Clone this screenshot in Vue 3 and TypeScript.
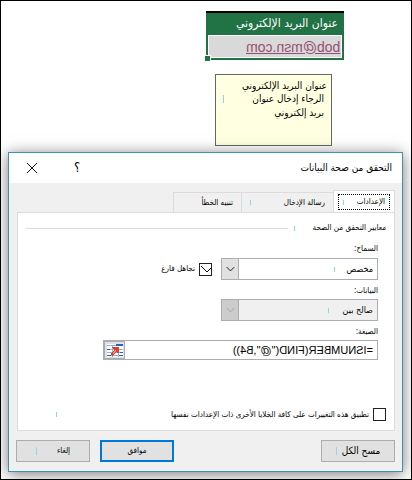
<script setup lang="ts">
import { ref } from 'vue'

const tabs = ['الإعدادات', 'رسالة الإدخال', 'تنبيه الخطأ']
const activeTab = ref(0)
const allow = ref('مخصص')
const dataRule = ref('صالح بين')
const ignoreBlank = ref(true)
const applyToAll = ref(false)
const formula = ref('=ISNUMBER(FIND("@",B4))')
</script>

<template>
  <main class="sheet" dir="rtl" lang="ar">
    <table class="cells">
      <thead>
        <tr><th scope="col">عنوان البريد الإلكتروني</th></tr>
      </thead>
      <tbody>
        <tr>
          <td><a class="mirror" dir="ltr" href="mailto:bob@msn.com">bob@msn.com</a><i class="handle"></i></td>
        </tr>
      </tbody>
    </table>

    <aside class="note">
      <strong>عنوان البريد الإلكتروني</strong>
      <p><span>الرجاء إدخال عنوان</span><i class="tick"></i></p>
      <p>بريد إلكتروني</p>
    </aside>

    <section class="dialog" role="dialog" aria-labelledby="title">
      <header class="titlebar">
        <h1 id="title">التحقق من صحة البيانات</h1>
        <button type="button" class="plain" aria-label="تعليمات">؟</button>
        <button type="button" class="plain" aria-label="إغلاق">
          <svg width="12" height="12" viewBox="0 0 12 12"><path d="M1 1 11 11M11 1 1 11" /></svg>
        </button>
      </header>

      <div class="content">
        <nav class="tabs" role="tablist">
          <button
            v-for="(tab, i) in tabs"
            :key="tab"
            type="button"
            role="tab"
            class="tab"
            :class="{ active: i === activeTab }"
            :aria-selected="i === activeTab"
            @click="activeTab = i"
          >
            <span class="tab-text">{{ tab }}<i v-if="i < 2" class="tick short"></i></span>
          </button>
        </nav>

        <form class="panel" @submit.prevent>
          <h2 class="legend"><span>معايير التحقق من الصحة</span><i class="tick short"></i><i class="rule"></i></h2>

          <div class="fields">
            <label for="allow">السماح:</label>
            <div class="line">
              <div class="combo">
                <select id="allow" v-model="allow"><option>مخصص</option></select>
                <i class="tick short"></i>
                <svg class="arrow" width="17" height="20" viewBox="0 0 17 20"><path d="M5 8 9 12 13 8" /></svg>
              </div>
              <label class="check">
                <input v-model="ignoreBlank" type="checkbox" />
                <svg class="mark" width="13" height="13" viewBox="0 0 13 13"><path d="M2 3 8 9 12 5" /></svg>
                <span>تجاهل فارغ</span>
              </label>
            </div>

            <label for="data">البيانات:</label>
            <div class="line">
              <div class="combo disabled">
                <select id="data" v-model="dataRule" disabled><option>صالح بين</option></select>
                <i class="tick short"></i>
                <svg class="arrow" width="17" height="20" viewBox="0 0 17 20"><path d="M5 8 9 12 13 8" /></svg>
              </div>
            </div>

            <label for="formula">الصيغة:</label>
            <div class="formula">
              <input id="formula" v-model="formula" class="mirror" dir="ltr" type="text" spellcheck="false" />
              <button type="button" class="picker" aria-label="تحديد نطاق">
                <svg width="16" height="13" viewBox="0 0 16 13" shape-rendering="crispEdges">
                  <path fill="#fff" d="M0 0h16v13H0z" />
                  <path fill="#8fb2e6" d="M0 1h9v1H0zM0 5h16v1H0zM0 8h16v1H0zM0 11h16v1H0zM5 1h1v12H5zM11 3h1v10h-1z" />
                  <path fill="#2c62b8" d="M9 0h7v2H9zM0 11h4v1H0zM12 11h4v1h-4zM0 5h3v1H0zM13 8h3v1h-3z" />
                  <path fill="#dc4128" d="M5 3h7v6h-1L9 8l-3 4-3-2 4-4z" />
                  <path fill="#f58a68" d="m5 9 3-3 1 1-3 3z" />
                </svg>
              </button>
            </div>
          </div>

          <label class="check apply">
            <input v-model="applyToAll" type="checkbox" />
            <span>تطبيق هذه التغييرات على كافة الخلايا الأخرى ذات الإعدادات نفسها</span>
            <i class="tick short"></i>
          </label>
        </form>

        <footer class="actions">
          <button type="button" class="btn clear">مسح الكل<i class="tick"></i></button>
          <button type="button" class="btn primary">موافق</button>
          <button type="button" class="btn cancel">إلغاء<i class="tick"></i></button>
        </footer>
      </div>
    </section>
  </main>
</template>

<style>
body {
  margin: 0;
  background: #fff;
}
</style>

<style scoped>
* {
  box-sizing: border-box;
}

.sheet {
  min-height: 100vh;
  padding: 10px 8px 7px 7px;
  border: 1px solid #000;
  overflow: hidden;
  display: flex;
  flex-direction: column;
  align-items: flex-start;
  font: 8px/12px "DejaVu Sans Condensed", "DejaVu Sans", sans-serif;
  color: #000;
}

button,
input,
select {
  margin: 0;
  font: inherit;
  color: inherit;
}

.mirror {
  transform: scaleX(-1);
}

.tick {
  display: inline-block;
  flex: none;
  width: 1px;
  height: 8px;
  background: #92d4ea;
}

.tick.short {
  height: 5px;
}

.cells {
  width: 138px;
  margin-inline-start: 59px;
  border-collapse: separate;
  border-spacing: 0;
}

.cells th {
  height: 24px;
  padding: 0 6px 2px;
  border-top: 2px solid #000;
  background: #217346;
  color: #fff;
  font-size: 12px;
  font-weight: 400;
  text-align: start;
  white-space: nowrap;
}

.cells td {
  position: relative;
  height: 25px;
  padding: 0 2px;
  border: 2px solid #217346;
  border-top: 0;
  background: #d9d9d9;
  box-shadow: inset 0 0 0 1px #fff;
}

.cells a {
  display: block;
  width: fit-content;
  color: #954f72;
  font: 14px/18px "Liberation Sans", sans-serif;
}

.handle {
  position: absolute;
  left: -4px;
  bottom: -4px;
  width: 7px;
  height: 7px;
  border: 1px solid #fff;
  background: #217346;
}

.note {
  width: 117px;
  height: 72px;
  margin-top: 14px;
  margin-inline-start: 71px;
  padding: 5px 4px;
  border: 1px solid #666;
  background: #ffffe1;
  font-size: 10px;
  white-space: nowrap;
}

.note strong {
  display: block;
  font-weight: 400;
}

.note p {
  display: flex;
  justify-content: space-between;
  align-items: center;
  margin: 0;
  padding: 0 3px;
  line-height: 14px;
}

.dialog {
  align-self: stretch;
  flex: 1;
  display: flex;
  flex-direction: column;
  margin-top: 6px;
  border: 1px solid #3f92ae;
  background: #f0f0f0;
  box-shadow: 0 2px 14px #0008;
}

.titlebar {
  display: flex;
  align-items: center;
  height: 30px;
  padding: 0 10px 0 17px;
  background: #fff;
}

.titlebar h1 {
  flex: 1;
  margin: 0;
  font-size: 10px;
  font-weight: 400;
}

.plain {
  display: flex;
  justify-content: center;
  width: 12px;
  padding: 0;
  border: 0;
  background: none;
  font-size: 13px;
}

.plain + .plain {
  margin-inline-start: 33px;
}

svg {
  display: block;
}

svg path:not([fill]) {
  fill: none;
  stroke: #111;
}

.content {
  flex: 1;
  display: flex;
  flex-direction: column;
  padding: 7px 7px 9px;
}

.tabs {
  display: flex;
  align-items: flex-end;
}

.tab {
  flex: none;
  width: 68px;
  height: 20px;
  padding: 0 8px;
  border: 1px solid #dcdcdc;
  border-width: 1px 0 0 1px;
  background: #f0f0f0;
  white-space: nowrap;
}

.tab:nth-child(2) {
  width: 92px;
}

.tab.active {
  width: 62px;
  height: 23px;
  margin-bottom: -1px;
  padding: 3px 4px;
  border-width: 1px 1px 0;
  background: #fff;
}

.tab-text {
  display: flex;
  align-items: center;
  justify-content: space-between;
}

.active .tab-text {
  height: 16px;
  padding: 0 4px;
  border: 1px dotted #000;
}

.panel {
  flex: 1;
  display: flex;
  flex-direction: column;
  margin-inline-end: 1px;
  padding: 9px 8px;
  border: 1px solid #dcdcdc;
  background: #fff;
}

.legend {
  display: flex;
  align-items: center;
  gap: 18px;
  margin: 0;
  font: inherit;
}

.legend .rule {
  flex: 1;
  height: 1px;
  margin-inline-start: -12px;
  background: #dcdcdc;
}

.fields {
  display: flex;
  flex-direction: column;
  padding-inline-start: 8px;
}

.fields > label {
  height: 19px;
  padding-top: 5px;
}

.fields > label[for="allow"] {
  height: 24px;
  padding-top: 9px;
}

.line {
  display: flex;
  align-items: center;
  gap: 9px;
}

.combo {
  display: grid;
  width: 157px;
  height: 22px;
  border: 1px solid #abadb3;
  background: #fff;
}

.combo > * {
  grid-area: 1 / 1;
}

.combo select {
  width: 100%;
  padding: 0 4px;
  border: 0;
  border-radius: 0;
  appearance: none;
  background: none;
  font-size: 9px;
  opacity: 1;
}

.combo .tick {
  align-self: center;
  margin-inline-start: 42px;
}

.disabled .tick {
  margin-inline-start: 48px;
}

.arrow {
  justify-self: end;
  border-right: 1px solid #abadb3;
  background: #e1e1e1;
  pointer-events: none;
}

.disabled {
  background: #f0f0f0;
}

.disabled .arrow {
  background: #ccc;
}

.disabled .arrow path:not([fill]) {
  stroke: #a0a0a0;
}

.check {
  display: grid;
  grid-template-columns: 13px auto auto;
  align-items: center;
  gap: 4px;
  white-space: nowrap;
}

.check > * {
  grid-row: 1;
}

.check input {
  grid-column: 1;
  width: 13px;
  height: 13px;
  border: 1px solid #222;
  appearance: none;
  background: #fff;
}

.check span {
  grid-column: 2;
}

.mark {
  grid-column: 1;
  visibility: hidden;
  pointer-events: none;
}

input:checked + .mark {
  visibility: visible;
}

.formula {
  display: flex;
  width: 275px;
  height: 20px;
  border: 1px solid #abadb3;
}

.formula input {
  flex: 1;
  min-width: 0;
  padding: 0 4px;
  border: 0;
  background: #fff;
  font: 11px/16px "Liberation Sans", sans-serif;
}

.picker {
  display: grid;
  place-items: center;
  width: 21px;
  padding: 0;
  border: 1px solid #abadb3;
  background: #e1e1e1;
}

.apply {
  justify-content: start;
  margin-top: auto;
}

.apply .tick {
  margin-inline-start: 110px;
}

.actions {
  display: flex;
  gap: 10px;
  margin-top: 9px;
}

.btn {
  display: flex;
  align-items: center;
  justify-content: center;
  gap: 5px;
  width: 74px;
  height: 22px;
  padding: 0;
  border: 1px solid #adadad;
  background: #e1e1e1;
}

.clear {
  margin-inline-end: auto;
  font-size: 10px;
}

.primary {
  border: 2px solid #0078d7;
}

.cancel {
  gap: 20px;
}
</style>
